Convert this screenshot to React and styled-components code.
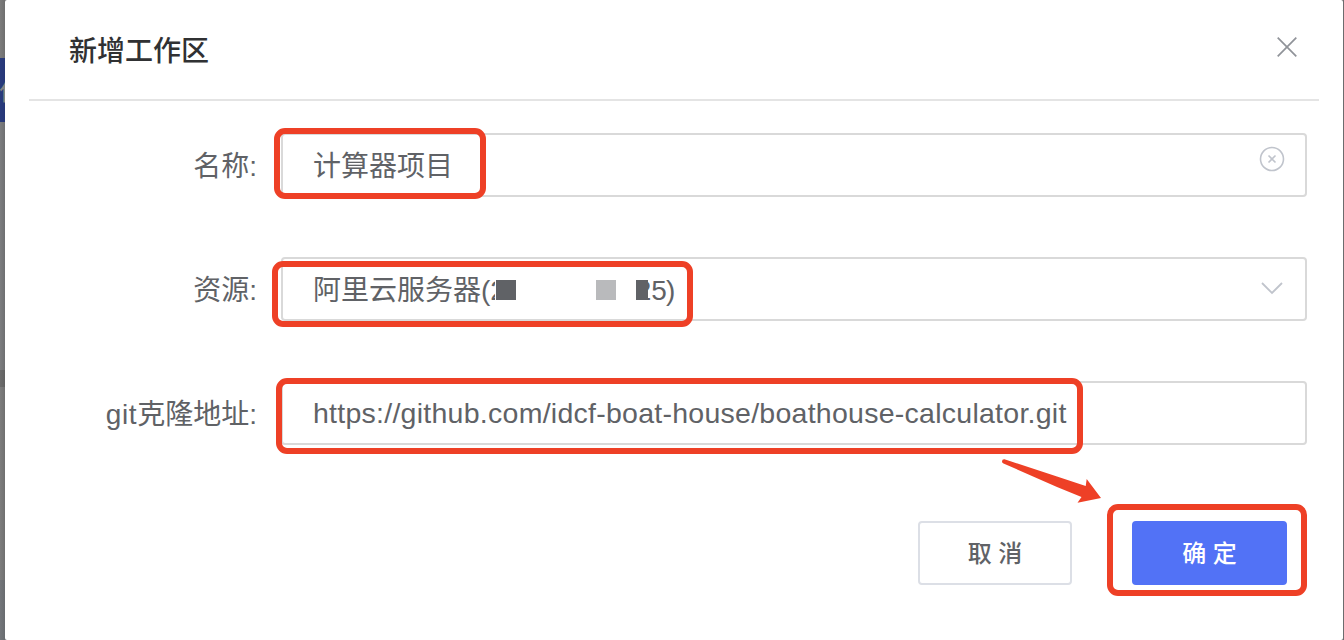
import React from "react";
import styled, { createGlobalStyle } from "styled-components";

const GlobalStyle = createGlobalStyle`
  * { box-sizing: border-box; }
  body {
    margin: 0;
    font-family: "Liberation Sans", "Noto Sans CJK SC", sans-serif;
    color: #606266;
  }
`;

const Page = styled.div`
  width: 1344px;
  height: 640px;
  display: flex;
  overflow: hidden;
  background: #6c6c6e;
`;

const Backdrop = styled.div`
  width: 5px;
  flex: none;
  display: flex;
  flex-direction: column;
  overflow: hidden;
`;

const Strip = styled.div`
  height: ${(p) => p.$height}px;
  flex: none;
  background: linear-gradient(to right, ${(p) => p.$from}, ${(p) => p.$to});
`;

const StripButton = styled(Strip)`
  overflow: hidden;
  color: #858585;
  font-size: 24px;
  line-height: 68px;
  text-indent: -1px;
  white-space: nowrap;
`;

const Dialog = styled.section`
  position: relative;
  width: 1338px;
  height: 640px;
  padding: 0 24px;
  background: #fff;
  border-radius: 2px;
`;

const Header = styled.header`
  height: 101px;
  padding: 0 22px 6px 40px;
  display: flex;
  align-items: center;
  justify-content: space-between;
  border-bottom: 2px solid #e4e4e4;
`;

const Title = styled.h1`
  margin: 11px 0 0;
  font-size: 28px;
  font-weight: 500;
  line-height: 40px;
  color: #303133;
`;

const CloseButton = styled.button`
  display: flex;
  padding: 0;
  border: 0;
  background: none;
`;

const Form = styled.form`
  padding: 32px 12px 0 0;
  display: flex;
  flex-direction: column;
  gap: 60px;
`;

const Row = styled.div`
  height: 64px;
  display: grid;
  grid-template-columns: 228px 1026px;
  column-gap: 24px;
`;

const Label = styled.label`
  text-align: right;
  font-size: 28px;
  line-height: 67px;
  white-space: nowrap;
`;

const Latin = styled.span`
  letter-spacing: 0.6px;
`;

const Field = styled.div`
  position: relative;
  height: 64px;
  padding: 0 20px 0 30px;
  display: flex;
  align-items: center;
  justify-content: space-between;
  border: 2px solid #d9d9d9;
  border-radius: 4px;
`;

const Value = styled.span`
  display: flex;
  align-items: center;
  padding-top: ${(p) => p.$drop ?? 3}px;
  font-size: ${(p) => p.$size || 28}px;
  line-height: 57px;
  white-space: nowrap;
  letter-spacing: ${(p) => p.$spacing || 0}px;
`;

const Cut = styled.span`
  width: ${(p) => p.$width}px;
  display: flex;
  justify-content: ${(p) => p.$side || "flex-start"};
  overflow: hidden;
`;

const Mask = styled.span`
  width: ${(p) => p.$width}px;
  height: 20px;
  margin-left: ${(p) => p.$gap || 0}px;
  margin-bottom: 2px;
  background: ${(p) => p.$color};
`;

const Tail = styled.span`
  letter-spacing: -0.8px;
`;

const FieldIcon = styled.svg`
  flex: none;
  margin-top: ${(p) => p.$shift || 0}px;
`;

const Highlight = styled.span`
  position: absolute;
  left: ${(p) => p.$x}px;
  top: ${(p) => p.$y}px;
  width: ${(p) => p.$w}px;
  height: ${(p) => p.$h}px;
  border: 6px solid #ee4026;
  border-radius: 11px;
  pointer-events: none;
`;

const Footer = styled.footer`
  padding: 76px 32px 0 0;
  display: flex;
  justify-content: flex-end;
  gap: 60px;
`;

const Button = styled.button`
  position: relative;
  width: ${(p) => (p.$primary ? 155 : 154)}px;
  height: 64px;
  padding: 2px 0 0;
  border: 2px solid ${(p) => (p.$primary ? "#5272f6" : "#dcdfe6")};
  border-radius: 4px;
  background: ${(p) => (p.$primary ? "#5272f6" : "#fff")};
  color: ${(p) => (p.$primary ? "#fff" : "#606266")};
  font-family: inherit;
  font-size: 24px;
  font-weight: 500;
  line-height: 58px;
`;

const Arrow = styled.svg`
  position: absolute;
  left: 995px;
  top: 455px;
  pointer-events: none;
`;

export default function App() {
  return (
    <Page>
      <GlobalStyle />
      <Backdrop>
        <Strip $height={58} $from="#7c7c7c" $to="#6f6f6f" />
        <StripButton $height={64} $from="#293b7d" $to="#263777">作</StripButton>
        <Strip $height={248} $from="#7c7d7f" $to="#6e6f71" />
        <Strip $height={17} $from="#6c6c6c" $to="#616161" />
        <Strip $height={193} $from="#7d7d7d" $to="#707070" />
        <Strip $height={60} $from="#73767a" $to="#686b6f" />
      </Backdrop>
      <Dialog>
        <Header>
          <Title>新增工作区</Title>
          <CloseButton aria-label="关闭">
            <svg width="20" height="20" viewBox="0 0 20 20" fill="none" stroke="#909399" strokeWidth="1.7">
              <path d="M.7.7 19.3 19.3M19.3.7.7 19.3" />
            </svg>
          </CloseButton>
        </Header>
        <Form>
          <Row>
            <Label>名称:</Label>
            <Field>
              <Value>计算器项目</Value>
              <FieldIcon $shift={-12} width="26" height="26" viewBox="0 0 26 26" fill="none" stroke="#c0c4cc" strokeWidth="1.6">
                <circle cx="13" cy="13" r="11.5" />
                <path d="m9.500 9.500 7 7m0-7-7 7" />
              </FieldIcon>
              <Highlight $x={-9} $y={-7} $w={212} $h={71} />
            </Field>
          </Row>
          <Row>
            <Label>资源:</Label>
            <Field>
              <Value>
                阿里云服务器(
                <Cut $width={5}>2</Cut>
                <Mask $width={20} $gap={1} $color="#606266" />
                <Mask $width={20} $gap={80} $color="#b9babc" />
                <Mask $width={12} $gap={20} $color="#606266" />
                <Cut $width={3} $side="flex-end">2</Cut>
                <Tail>5)</Tail>
              </Value>
              <FieldIcon $shift={-2} width="26" height="16" viewBox="0 0 26 16" fill="none" stroke="#c0c4cc" strokeWidth="1.8">
                <path d="m3 3 10 10L23 3" />
              </FieldIcon>
              <Highlight $x={-11} $y={2} $w={421} $h={66} />
            </Field>
          </Row>
          <Row>
            <Label><Latin>git</Latin>克隆地址:</Label>
            <Field>
              <Value $drop={1} $size={28.5} $spacing={0.26}>https://github.com/idcf-boat-house/boathouse-calculator.git</Value>
              <Highlight $x={-7} $y={-5} $w={807} $h={76} />
            </Field>
          </Row>
        </Form>
        <Footer>
          <Button>取 消</Button>
          <Button $primary>
            确 定
            <Highlight $x={-27} $y={-19} $w={200} $h={92} />
          </Button>
        </Footer>
        <Arrow width="110" height="52" viewBox="0 0 110 52" fill="#ee4026">
          <path d="M4.500 4.200Q2 4 2 6.500Q2 8 3.500 8.500L57 32 81.500 42 77.500 47.800 101 43 86.700 24 85.700 31 57 21.500Z" />
        </Arrow>
      </Dialog>
    </Page>
  );
}
